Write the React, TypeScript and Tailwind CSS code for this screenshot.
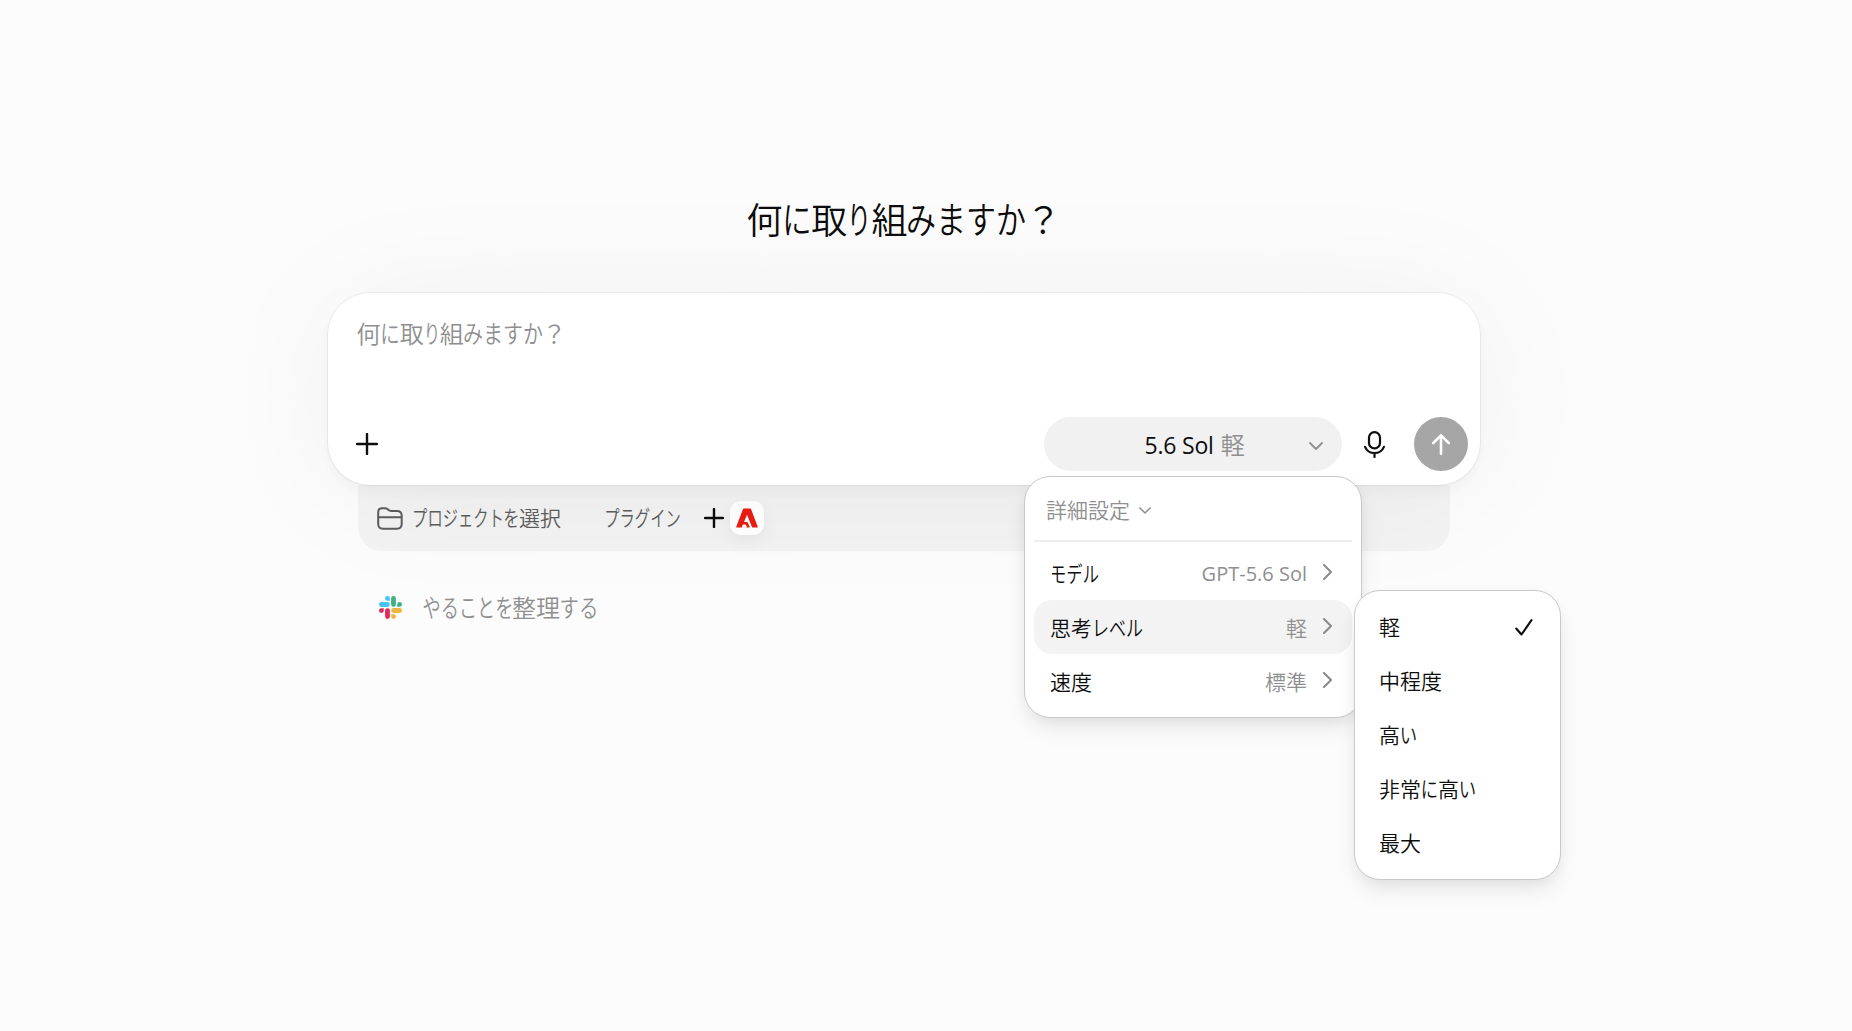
import React from "react";

type Part = [text: string, width?: number];

/** One line of Japanese text whose kana runs are condensed to the given widths. */
function Jp({ size, parts, className = "" }: { size: number; parts: Part[]; className?: string }) {
  return (
    <span className={`inline-flex whitespace-nowrap leading-none ${className}`} style={{ fontSize: size }}>
      {parts.map(([text, width], i) => {
        if (width === undefined) {
          return <span key={i} className="block">{text}</span>;
        }
        // Kana are drawn a little larger than their box so that the condensed runs keep their weight.
        const scale = (width / (size * text.length)) * 1.02;
        return (
          <span key={i} className="flex justify-center" style={{ width }}>
            <span className="block shrink-0 origin-center" style={{ transform: `scale(${scale}, 1.03)` }}>
              {text}
            </span>
          </span>
        );
      })}
    </span>
  );
}

function Plus({ size, stroke }: { size: number; stroke: number }) {
  const c = size / 2;
  return (
    <svg width={size} height={size} viewBox={`0 0 ${size} ${size}`} fill="none" stroke="#0d0d0d" strokeWidth={stroke} strokeLinecap="round">
      <path d={`M${c} 1V${size - 1}M1 ${c}H${size - 1}`} />
    </svg>
  );
}

function ChevronDown({ className }: { className: string }) {
  return (
    <svg className={className} viewBox="0 0 14 8" fill="none" stroke="#8f8f8f" strokeWidth="1.8" strokeLinecap="round" strokeLinejoin="round">
      <path d="M1 1l6 6 6-6" />
    </svg>
  );
}

function ChevronRight() {
  return (
    <svg className="h-4 w-[9px]" viewBox="0 0 9 16" fill="none" stroke="#8a8a8a" strokeWidth="2" strokeLinecap="round" strokeLinejoin="round">
      <path d="M1 1l7 7-7 7" />
    </svg>
  );
}

function Folder() {
  return (
    <svg className="h-[23px] w-[26px]" viewBox="0 0 26 23" fill="none" stroke="#5d5d5d" strokeWidth="2" strokeLinejoin="round">
      <path d="M1.2 5.2C1.2 2.6 2.5 1.3 5 1.3h2.8c1.2 0 2 .3 2.900 1l1 .8c.7.6 1.300.8 2.200.8H20c3.200 0 4.700 1.500 4.700 4.700V17c0 3.200-1.500 4.700-4.700 4.700H6c-3.300 0-4.800-1.500-4.800-4.700zM1.200 10.200h23.500" />
    </svg>
  );
}

function Mic() {
  return (
    <svg className="h-[27px] w-[21px]" viewBox="0 0 21 27" fill="none" stroke="#0d0d0d" strokeWidth="2.200" strokeLinecap="round">
      <rect x="5" y="1.100" width="11" height="16.300" rx="5.500" />
      <path d="M1.100 15.800C2.600 19.500 6 22 10.500 22s7.900-2.500 9.400-6.200M10.500 22v4" />
    </svg>
  );
}

function Slack() {
  return (
    <svg className="size-[23px]" viewBox="0 0 23 23">
      <path fill="#44c4ef" d="M8.400 0a2.400 2.400 0 0 1 2.400 2.400v2.400H8.400a2.400 2.400 0 0 1 0-4.800zM2.400 6.100h6a2.400 2.400 0 0 1 0 4.800h-6a2.400 2.400 0 0 1 0-4.800z" />
      <path fill="#3bb384" d="M23 8.400a2.400 2.400 0 0 1-2.400 2.400h-2.400V8.400a2.400 2.400 0 0 1 4.800 0zM16.900 2.400v6a2.400 2.400 0 0 1-4.800 0v-6a2.400 2.400 0 0 1 4.800 0z" />
      <path fill="#edb441" d="M14.600 23a2.400 2.400 0 0 1-2.400-2.400v-2.400h2.400a2.400 2.400 0 0 1 0 4.800zM20.600 16.900h-6a2.400 2.400 0 0 1 0-4.800h6a2.400 2.400 0 0 1 0 4.800z" />
      <path fill="#e0285c" d="M0 14.600a2.400 2.400 0 0 1 2.400-2.400h2.400v2.400a2.400 2.400 0 0 1-4.800 0zM6.100 20.600v-6a2.400 2.400 0 0 1 4.800 0v6a2.400 2.400 0 0 1-4.800 0z" />
    </svg>
  );
}

function Adobe() {
  return (
    <svg className="h-5 w-[22px]" viewBox="0 0 22 20" fill="#eb1c12">
      <path d="M7.800.5h6.400q.6 0 .8.600l6.800 17.800q.2.600-.4.600h-4.700q-.5 0-.7-.5L11.200 7.200q-.2-.4-.4 0L8 14h3q.5 0 .7.400l2 4.500q.2.600-.4.600H.6q-.6 0-.4-.6L7 1.100q.2-.6.800-.6z" />
      <path fill="white" d="M6.800 16.400h2.900l1.300 3.100-5.300.5z" />
    </svg>
  );
}

function MenuRow({ label, value, active }: { label: Part[]; value: React.ReactNode; active?: boolean }) {
  return (
    <div className={`flex h-[54px] items-center rounded-[18px] pl-4 pr-5 ${active ? "bg-[#f3f3f3]" : ""}`}>
      <Jp size={21} parts={label} className="text-[#0d0d0d]" />
      <span className="ml-auto mr-4 flex text-[#8f8f8f]">{value}</span>
      <span className="-mt-[2px]"><ChevronRight /></span>
    </div>
  );
}

const levels: Part[][] = [
  [["軽"]],
  [["中程度"]],
  [["高"], ["い", 17]],
  [["非常"], ["に", 17], ["高"], ["い", 17]],
  [["最大"]],
];

const question = (size: number): Part[] => [
  ["何"],
  ["に", size * 0.8],
  ["取"],
  ["り", size * 0.67],
  ["組"],
  ["みますか", size * 3.27],
  ["？"],
];

const menuSurface =
  "absolute border border-[#c9c9c9] bg-white shadow-[0_12px_24px_-4px_rgba(0,0,0,0.10),0_4px_12px_rgba(0,0,0,0.03)]";

export default function App() {
  return (
    <main className="flex h-[1031px] w-full flex-col overflow-hidden bg-[#fcfcfc] font-['Noto_Sans_CJK_JP',sans-serif] font-[350] text-[#0d0d0d]">
      <div className="ml-[328px] w-[1152px] pt-[200px]">
        <h1 className="flex h-[93px] pl-[418.500px] font-[350]">
          <Jp size={36} parts={question(36)} />
        </h1>

        <section className="relative z-10 flex h-48 flex-col justify-between rounded-[42px] bg-white pb-[14px] pl-[28.500px] pr-3 pt-7 shadow-[0_0_0_1px_rgba(0,0,0,0.05),0_6px_12px_rgba(0,0,0,0.03),0_6px_135px_rgba(0,0,0,0.05)]">
          <Jp size={24} parts={question(24)} className="text-[#8f8f8f]" />
          <div className="flex h-[54px] items-center">
            <span className="-ml-[0.500px]"><Plus size={22} stroke={2.4} /></span>
            <button className="relative ml-auto flex h-[54px] w-[298px] items-center rounded-full bg-[#f1f1f1] pl-[100.500px] pr-[19px]">
              <span className="pt-[2px] font-['Open_Sans'] text-[23px] font-normal leading-none tracking-[-0.2px]">5.6 Sol</span>
              <Jp size={24} parts={[["軽"]]} className="ml-[7px] text-[#8f8f8f]" />
              <ChevronDown className="ml-auto mt-[3px] h-2 w-[14px]" />
            </button>
            <span className="ml-[22px]"><Mic /></span>
            <button className="ml-[29px] flex size-[54px] items-center justify-center rounded-full bg-[#a6a6a6]">
              <svg className="h-[21px] w-[18px]" viewBox="0 0 18 21" fill="none" stroke="white" strokeWidth="2.600" strokeLinecap="round" strokeLinejoin="round">
                <path d="M9 19.700V1.500M1.300 9L9 1.300 16.700 9" />
              </svg>
            </button>
          </div>

          <div className={`${menuSurface} left-[696px] top-[183px] h-[242px] w-[338px] rounded-[26px] px-[9px] pt-[6px]`}>
            <div className="flex h-[57px] items-center pb-[2px] pl-3 text-[#8f8f8f]">
              <Jp size={21} parts={[["詳細設定"]]} className="-mt-[2px]" />
              <ChevronDown className="ml-[9px] h-[7px] w-3" />
            </div>
            <div className="mb-1 h-[2px] bg-[#efefef]" />
            <MenuRow label={[["モデル", 48]]} value={<span className="pt-[2px] font-['Open_Sans'] text-[20px] font-normal leading-none">GPT-5.6 Sol</span>} />
            <MenuRow active label={[["思考"], ["レベル", 50]]} value={<Jp size={21} parts={[["軽"]]} />} />
            <MenuRow label={[["速度"]]} value={<Jp size={21} parts={[["標準"]]} />} />
          </div>

          <div className={`${menuSurface} left-[1026px] top-[297px] h-[290px] w-[207px] rounded-[26px] px-2 pt-[9px]`}>
            {levels.map((parts, i) => (
              <div key={i} className="flex h-[54px] items-center pl-4 pr-[19px]">
                <Jp size={21} parts={parts} className="-mt-px text-[#0d0d0d]" />
                {i === 0 && (
                  <svg className="ml-auto h-[17px] w-[18px]" viewBox="0 0 18 17" fill="none" stroke="#0d0d0d" strokeWidth="2.100" strokeLinecap="round" strokeLinejoin="round">
                    <path d="M1.200 9.500L6.500 15.500 16.500 1.200" />
                  </svg>
                )}
              </div>
            ))}
          </div>
        </section>

        <div className="mx-[30px] flex h-[66px] items-center rounded-b-[24px] bg-[#f3f3f3] pl-[19px] text-[#5d5d5d]">
          <Folder />
          <Jp size={21} parts={[["プロジェクト", 90], ["を", 16], ["選択"]]} className="-mt-px ml-[10px]" />
          <Jp size={21} parts={[["プラグイン", 75]]} className="-mt-px ml-[44px]" />
          <span className="ml-[24px]"><Plus size={20} stroke={2.4} /></span>
          <span className="ml-[6px] flex size-[34px] items-center justify-center rounded-[11px] bg-white shadow-[0_6px_18px_rgba(0,0,0,0.06)]">
            <Adobe />
          </span>
        </div>

        <div className="flex h-[113px] items-center pl-[50.500px] text-[#8f8f8f]">
          <Slack />
          <Jp size={24} parts={[["やることを", 89], ["整理"], ["する", 38]]} className="-mt-[2px] ml-[21.500px]" />
        </div>
      </div>
    </main>
  );
}
